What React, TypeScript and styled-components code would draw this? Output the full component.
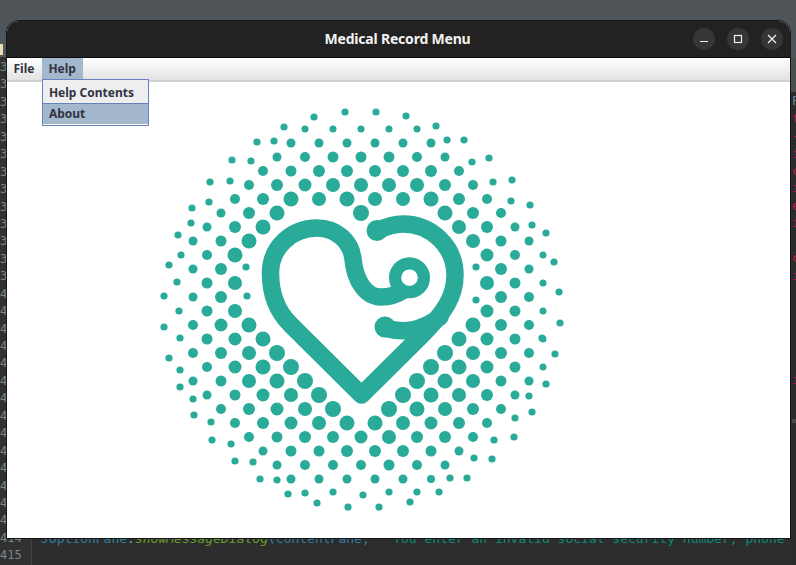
import React from 'react';
import styled, { createGlobalStyle } from 'styled-components';

const TEAL = '#2aaa98';

// halftone rows: [y, first x, radii...], dots sit 28px apart on each row
const ROWS: number[][] = [
  [128, 305, 3.5, 3.5, 3.5, 3.5, 3.5],
  [142, 291, 4.5, 4.5, 4.5, 4.5, 4.5, 4.5],
  [156, 277, 4.5, 5, 5.5, 5.5, 5.5, 5, 4.5],
  [170, 263, 5, 5.5, 6, 6, 6, 6, 6, 5],
  [184, 249, 5, 6, 6.5, 7, 7, 7, 7, 6, 5],
  [198, 235, 5, 6, 7.5, 7, 7.5, 7, 7, 7.5, 6, 5],
  [212, 221, 4.5, 6, 7.5],
  [212, 361, 8],
  [212, 445, 7.5, 6, 5],
  [226, 207, 4.5, 6, 7.5],
  [226, 459, 7, 6, 4.5],
  [240, 193, 4.5, 5.5, 7.5],
  [240, 473, 7, 5.5, 4.5],
  [254, 207, 5, 7.5],
  [254, 487, 6.5, 5, 3.5],
  [268, 193, 4.5, 6],
  [268, 501, 6, 4.5],
  [282, 207, 5.5, 7],
  [282, 487, 7, 5.5, 3.5],
  [296, 193, 4.5, 6],
  [296, 501, 6, 5],
  [310, 207, 5.5, 7],
  [310, 487, 6.5, 5.5, 3.5],
  [324, 193, 5, 6.5, 7.5],
  [324, 473, 7.5, 6, 5],
  [338, 207, 5.5, 6.5, 7.5],
  [338, 459, 7.5, 6.5, 5.5, 3.5],
  [352, 193, 5, 6, 7, 8],
  [352, 445, 8, 7, 6, 5],
  [366, 207, 5, 6.5, 7.5, 8],
  [366, 431, 8, 7.5, 6.5, 5.5, 3.5],
  [380, 193, 4.5, 5.5, 7, 7.5, 8],
  [380, 417, 8, 7.5, 7, 5.5, 4.5],
  [394, 207, 4.5, 5.5, 6.5, 7, 8],
  [394, 403, 8, 7.5, 7, 6, 4.5],
  [408, 221, 5, 6, 6.5, 7, 8],
  [408, 389, 8, 7.5, 7, 6, 5],
  [422, 235, 5, 6, 6.5, 7, 7.5, 7.5, 7, 6.5, 6, 5],
  [436, 249, 5, 5.5, 6, 6, 6.5, 7, 6, 6, 5],
  [450, 263, 4.5, 5.5, 5.5, 6, 6, 6, 5.5, 4.5],
  [464, 277, 4.5, 5, 5, 5, 5.5, 5, 4.5],
  [478, 291, 4.5, 4.5, 4.5, 4.5, 4.5, 4],
];

// the ragged outer ring does not follow the grid
const STRAYS: number[][] = [
  [345, 111], [376, 111], [314, 116], [406, 115], [284, 126], [436, 125],
  [257, 141], [274, 140], [447, 139], [464, 139], [232, 159], [251, 160],
  [472, 161], [489, 157], [210, 181], [230, 180], [493, 181], [512, 179],
  [192, 207], [209, 201], [511, 200], [530, 204], [191, 222], [532, 224],
  [178, 234], [546, 232], [181, 254], [554, 261], [169, 264], [246, 266],
  [476, 266], [177, 281], [164, 295], [247, 295], [559, 291], [476, 299],
  [179, 310], [164, 326], [560, 322], [180, 337], [542, 337], [169, 357],
  [555, 353], [180, 369], [180, 386], [546, 383], [193, 398], [529, 395],
  [194, 414], [532, 411], [211, 421], [515, 417], [212, 439], [231, 443],
  [494, 439], [514, 436], [474, 457], [492, 458], [235, 460], [253, 461],
  [260, 478], [277, 479], [450, 477], [467, 477], [288, 493], [305, 492],
  [333, 491], [363, 494], [389, 491], [417, 491], [439, 491], [317, 502],
  [348, 506], [379, 506], [410, 501],
];

const Logo = () => (
  <LogoSvg viewBox="155 100 415 415">
    <g fill={TEAL}>
      {ROWS.map(([y, x, ...radii]) =>
        radii.map((r, i) => <circle key={`${y}-${x}-${i}`} cx={x + i * 28} cy={y} r={r} />)
      )}
      {STRAYS.map(([x, y]) => (
        <circle key={`${x}-${y}`} cx={x} cy={y} r={3.6} />
      ))}
      <circle cx={377} cy={229.5} r={10.5} />
      <circle cx={385} cy={326} r={10.5} />
    </g>
    <g fill="none" stroke={TEAL} strokeWidth={17.5} strokeLinecap="round" strokeLinejoin="round">
      <path d="M377 230C385 226 395 223 403 223C432 223 455 246 455 274C455 295 445 311 422 334L361.5 394L290 323C277 310 270.5 292 270.5 272C270.5 247 291 227 317 227C336 227 351 240 353 258C355 280 366 296 381 296C390 296 398 293 404 289" />
      <path d="M385 327C395 330 405 330 412 329C422 327 432 322 440 316" />
      <circle cx={409.5} cy={276.7} r={14.4} strokeWidth={12.2} fill="#fff" />
    </g>
  </LogoSvg>
);

const GUTTER = Array.from({ length: 29 }, (_, i) => 387 + i);

// what shows of the next editor's text past the window's right edge, from line 389 down
const RIGHT_EDGE = ['P', 't', '-', 'i', 'c', 'i', 'e', 'i', '', 'c', 'i', '', '', '', '', '', 'i'];

const App = () => {
  return (
    <Desktop>
      <GlobalStyle />
      <TopBand>
        <FolderTip />
      </TopBand>
      <Editor>
        <Gutter>
          {GUTTER.map((n) => (
            <LineNumber key={n}>{n}</LineNumber>
          ))}
        </Gutter>
        <CodeColumn>
          <CodeLine>
            <Blue>JOptionPane</Blue>.<Green>showMessageDialog</Green>
            <Blue>(contentPane,</Blue>
            {'  '}
            <Teal>"You enter an invalid social security number, phone</Teal>
          </CodeLine>
        </CodeColumn>
        <RightStrip>
          <RightHeader />
          {RIGHT_EDGE.map((c, i) => (
            <RedChar key={i} $muted={c === 'P'}>
              {c}
            </RedChar>
          ))}
          <ScrollMark />
        </RightStrip>
      </Editor>

      <Window>
        <TitleBar>
          <Title>Medical Record Menu</Title>
          <WindowButtons>
            <RoundButton>
              <svg width="12" height="12" viewBox="0 0 12 12">
                <path d="M2 8.5H10" stroke="#eee" strokeWidth="1.2" />
              </svg>
            </RoundButton>
            <RoundButton>
              <svg width="12" height="12" viewBox="0 0 12 12">
                <rect x="2.5" y="2.5" width="7" height="7" fill="none" stroke="#eee" strokeWidth="1.2" />
              </svg>
            </RoundButton>
            <RoundButton>
              <svg width="12" height="12" viewBox="0 0 12 12">
                <path d="M2 2L10 10M10 2L2 10" stroke="#eee" strokeWidth="1.3" />
              </svg>
            </RoundButton>
          </WindowButtons>
        </TitleBar>
        <MenuBar>
          <MenuItem>File</MenuItem>
          <MenuItem $active>
            Help
            <Dropdown>
              <DropdownItem>Help Contents</DropdownItem>
              <DropdownItem $active>About</DropdownItem>
            </Dropdown>
          </MenuItem>
        </MenuBar>
        <Canvas>
          <Logo />
        </Canvas>
      </Window>
    </Desktop>
  );
};

const GlobalStyle = createGlobalStyle`
  html, body {
    margin: 0;
    padding: 0;
    background: #2d2d2d;
    font-family: "Noto Sans", sans-serif;
  }
`;

const Desktop = styled.div`
  position: relative;
  width: 796px;
  height: 565px;
  overflow: hidden;
  background: #2d2d2d;
  display: flex;
  flex-direction: column;
`;

const TopBand = styled.div`
  height: 57px;
  flex-shrink: 0;
  padding-top: 44px;
  box-sizing: border-box;
  background: #4f5558;
`;

const FolderTip = styled.div`
  width: 3px;
  height: 11px;
  background: #e9dcb0;
`;

const Editor = styled.div`
  flex: 1;
  min-height: 0;
  display: flex;
  font-family: "DejaVu Sans Mono", monospace;
`;

const Gutter = styled.div`
  width: 32px;
  flex-shrink: 0;
  box-sizing: border-box;
  border-right: 1px solid #444;
  background: #313131;
  padding: 2px 0 0 0;
  color: #7d8689;
  font-size: 12px;
`;

const LineNumber = styled.div`
  height: 17.45px;
  line-height: 17.45px;
`;

const CodeColumn = styled.div`
  flex: 1;
  min-width: 0;
  padding: 473px 0 0 9px;
  font-size: 13px;
  white-space: pre;
  overflow: hidden;
`;

const CodeLine = styled.div`
  line-height: 17.45px;
  color: #8a9a9d;
`;

const Blue = styled.span`
  color: #2f7f9f;
`;

const Green = styled.span`
  font-style: italic;
  color: #6a9b2f;
`;

const Teal = styled.span`
  color: #0f8a78;
`;

const RightStrip = styled.div`
  width: 6px;
  flex-shrink: 0;
  font-size: 13px;
  overflow: hidden;
  box-sizing: border-box;
  padding-left: 2px;
  background: #2b2b2b;
`;

const RightHeader = styled.div`
  height: 35.3px;
  margin-left: -2px;
  background: #4a4f50;
`;

const RedChar = styled.div<{ $muted?: boolean }>`
  height: 17.45px;
  line-height: 17.45px;
  color: ${({ $muted }) => ($muted ? '#6a8aa0' : '#c2174a')};
`;

const ScrollMark = styled.div`
  height: 4px;
  margin-top: 30px;
  background: #4a4a4a;
`;

const Window = styled.div`
  position: absolute;
  left: 7px;
  top: 21px;
  width: 783px;
  height: 517px;
  display: flex;
  flex-direction: column;
  border-radius: 12px 12px 0 0;
  overflow: hidden;
  background: #fff;
  box-shadow: 0 0 0 1px #161616;
`;

const TitleBar = styled.div`
  position: relative;
  height: 36px;
  flex-shrink: 0;
  display: flex;
  align-items: center;
  justify-content: center;
  background: #222;
  border-bottom: 1px solid #0c0c0c;
`;

const Title = styled.div`
  color: #f2f2f2;
  font-size: 14px;
  font-weight: 700;
  letter-spacing: -0.2px;
  padding: 0 2px 1px 0;
`;

const WindowButtons = styled.div`
  position: absolute;
  right: 7px;
  top: 7px;
  display: flex;
  gap: 12px;
`;

const RoundButton = styled.div`
  width: 22px;
  height: 22px;
  border-radius: 50%;
  background: #363636;
  display: flex;
  align-items: center;
  justify-content: center;
`;

const MenuBar = styled.div`
  position: relative;
  height: 22px;
  flex-shrink: 0;
  display: flex;
  background: linear-gradient(#ffffff, #e2e2e2);
  border-bottom: 2px solid #d2d2d2;
`;

const MenuItem = styled.div<{ $active?: boolean }>`
  position: relative;
  padding: 0 7.5px 0 6.5px;
  line-height: 22px;
  font-size: 12px;
  font-weight: 700;
  color: #333344;
  background: ${({ $active }) => ($active ? '#a3b8cc' : 'transparent')};
`;

const Dropdown = styled.div`
  position: absolute;
  left: 0;
  top: 21px;
  width: 105px;
  padding-bottom: 1px;
  background: #fff;
  border: 1px solid #6382bf;
  z-index: 2;
`;

const DropdownItem = styled.div<{ $active?: boolean }>`
  height: ${({ $active }) => ($active ? '20px' : '23px')};
  line-height: ${({ $active }) => ($active ? '20px' : '26px')};
  padding-left: 6px;
  white-space: nowrap;
  background: ${({ $active }) => ($active ? '#a3b8cc' : '#eeeeee')};
  border-top: ${({ $active }) => ($active ? '1px solid #6382bf' : 'none')};
`;

const Canvas = styled.div`
  flex: 1;
  min-height: 0;
  background: #fff;
  padding: 19px 0 0 148px;
`;

const LogoSvg = styled.svg`
  display: block;
  width: 415px;
  height: 415px;
`;

export default App;
